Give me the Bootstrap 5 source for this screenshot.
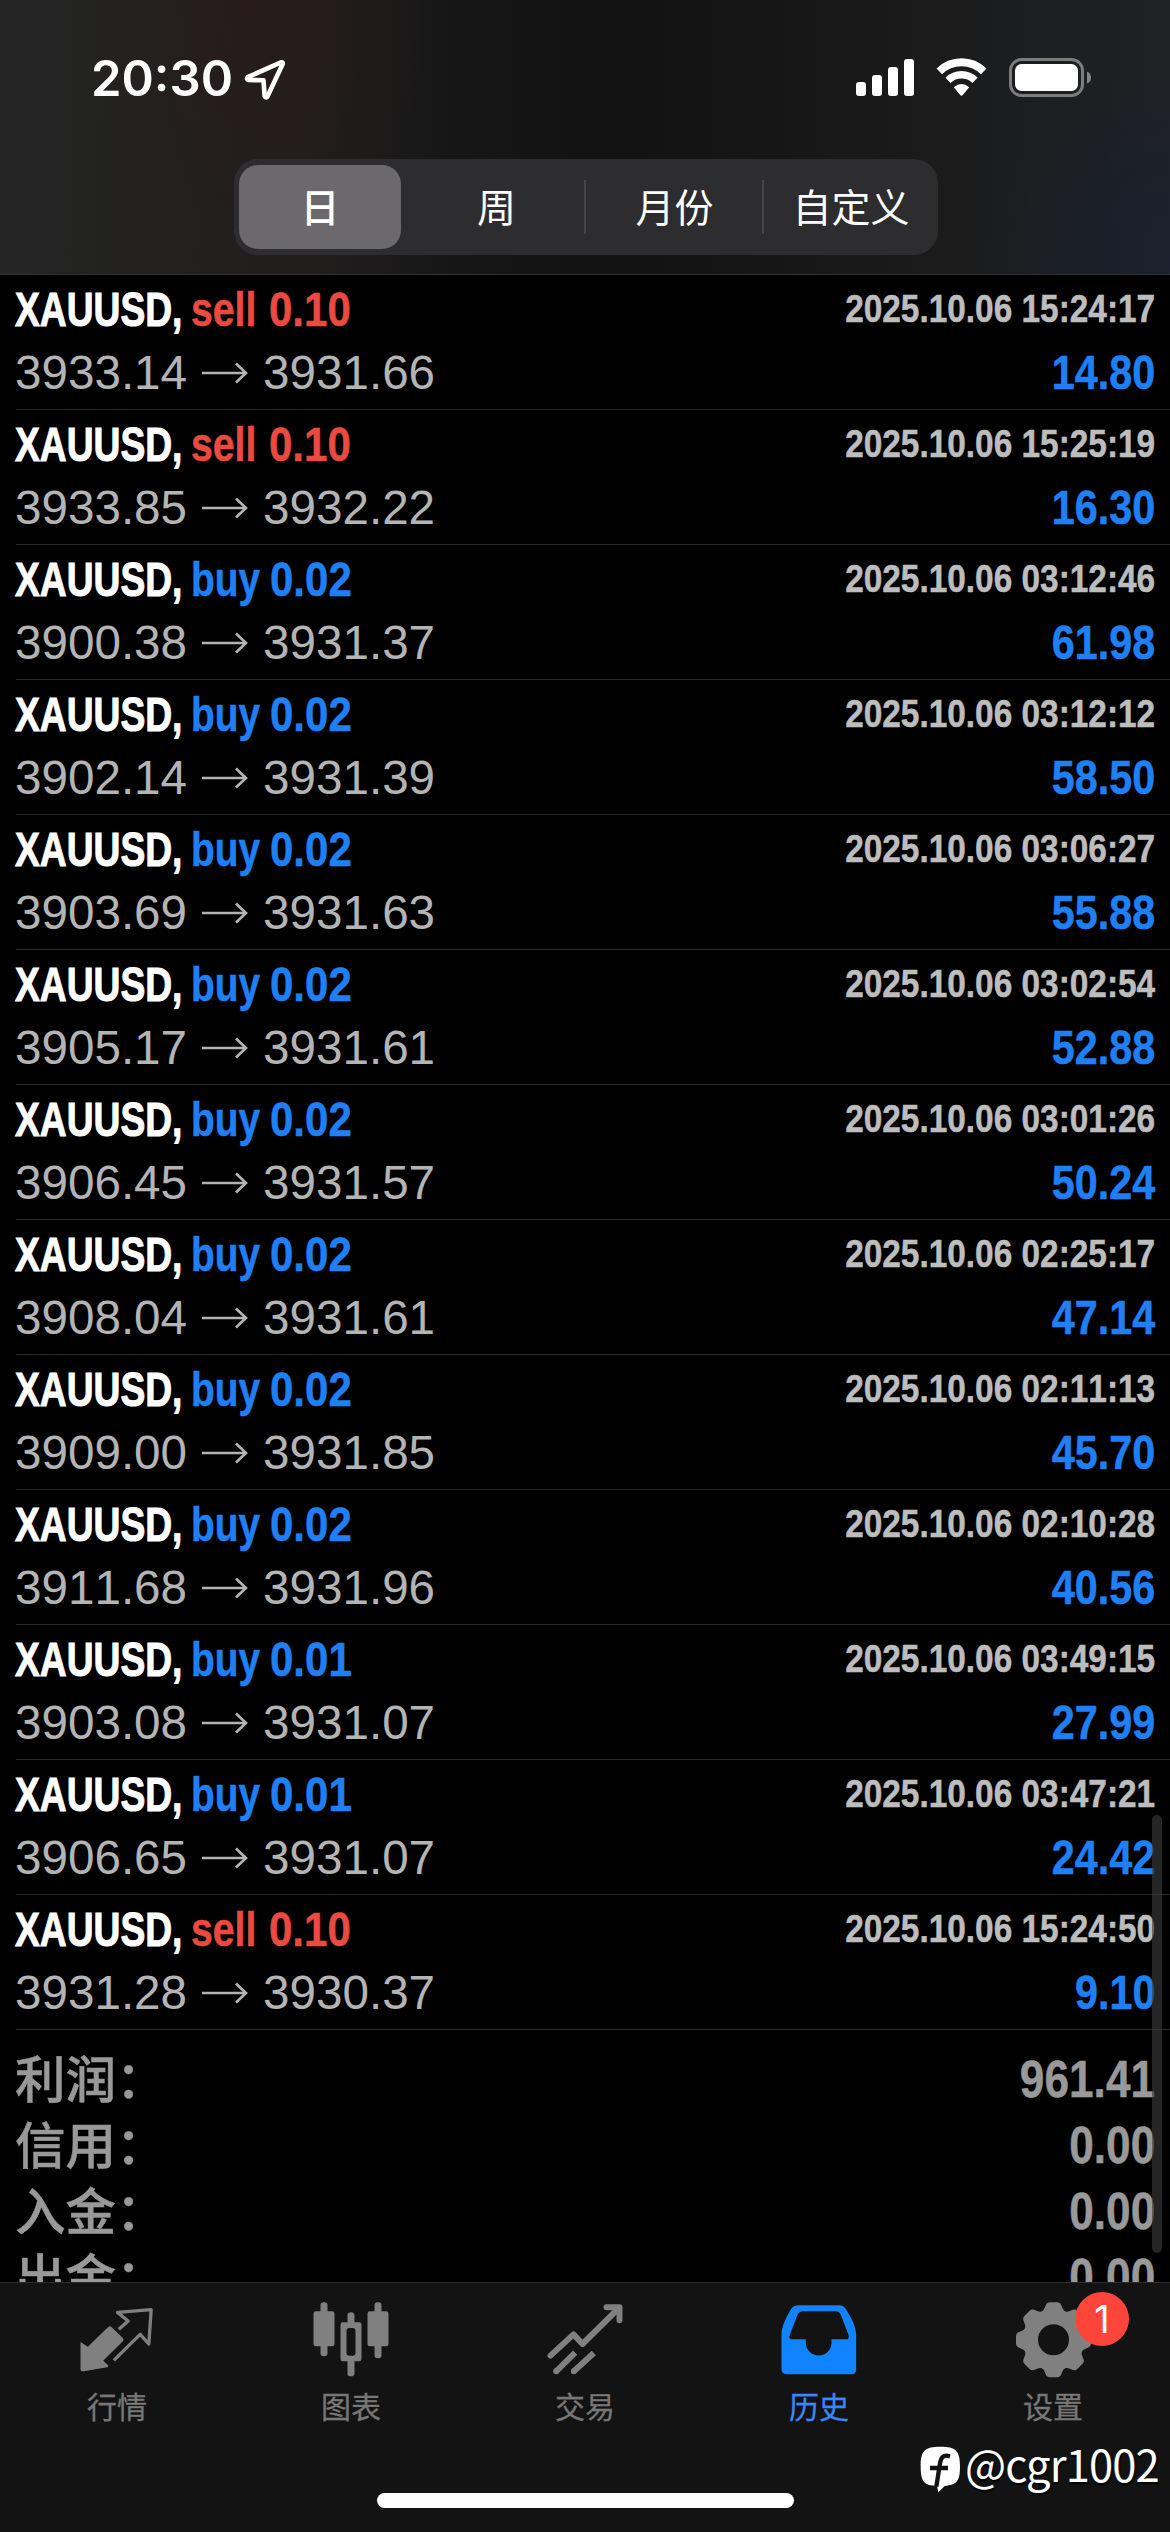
<!DOCTYPE html>
<html lang="zh-CN" data-bs-theme="dark">
<head>
<meta charset="utf-8">
<meta name="viewport" content="width=device-width, initial-scale=1">
<title>历史</title>
<link href="https://cdn.jsdelivr.net/npm/bootstrap@5.3.0/dist/css/bootstrap.min.css" rel="stylesheet">
<style>
  body { width: 1170px; height: 2532px; background: #000; font-family: "Liberation Sans", "Noto Sans CJK SC", sans-serif; font-kerning: none; overflow: hidden; }
  .top-area { height: 275px; border-bottom: 1px solid #323234;
    background: radial-gradient(circle at 1170px 270px, rgba(22,34,50,.65), transparent 200px),
      radial-gradient(ellipse 170px 320px at 255px 0, rgba(48,22,24,.4), transparent),
      linear-gradient(90deg, #252525 0, #222120 170px, #211e1e 310px, #151515 480px, #131313 600px, #141414 700px, #1b1b1b 930px, #1e2024 1130px, #1f2125 100%); }
  .status-row { height: 159px; padding: 41px 78px 0 91px; }
  .clock { font: 600 49px/76px Inter, sans-serif; }
  .cellular, .wifi-sign { margin-right: 22px; }
  .segments { width: 704px; height: 96px; margin-left: 234px; border-radius: 24px; background: #2d2d2f; grid-template-columns: 173px 178px 178px 175px; font: 400 39px/84px "Noto Sans CJK SC", sans-serif; }
  .seg { color: #fff; position: relative; text-align: center; padding: 4px 0 0 1px; }
  .seg.active span { display: block; margin: 2px 6px 0 4px; height: 84px; border-radius: 19px; background: #6b696c; line-height: 80px; font-weight: 500; }
  .seg.divided::after { content: ""; position: absolute; right: -1px; top: 21px; width: 2px; height: 54px; background: #454548; }
  .deals { margin-left: 16px; }
  .deal { height: 135px; padding: 3px 15px 0 0; border-bottom: 1px solid #2b2b2c; }
  .line { height: 63px; line-height: 63px; font-size: 48px; white-space: nowrap; }
  .fit { display: inline-block; transform-origin: 0 50%; font-weight: 700; -webkit-text-stroke: .5px currentColor; }
  .fit-end { transform-origin: 100% 50%; }
  .sym { width: 176px; color: #fff; margin-left: -1px; } .sym .fit { transform: scaleX(.775); -webkit-text-stroke-width: 1px; }
  .side-sell { width: 78px; } .side-buy { width: 79px; }
  .side-sell .fit { transform: scaleX(.815); } .side-buy .fit { transform: scaleX(.81); }
  .vol .fit { transform: scaleX(.875); }
  .sell { color: #ea4a40; } .buy { color: #1f80f5; }
  .stamp { font-size: 39px; line-height: 61px; color: #bdbdbd; } .stamp .fit { transform: scaleX(.856); }
  .price { color: #b4b4b4; margin-left: -1px; font-size: 47.6px; }
  .price svg { margin: 0 14px 0 14px; }
  .gain .fit { transform: scaleX(.86); color: #1f80f5; }
  .totals { margin: 0 15px 0 15px; padding-top: 16px; color: #999; }
  .total { height: 66px; line-height: 66px; }
  .total-name { font: 500 50.5px/60px "Noto Sans CJK SC", sans-serif; height: 60px; -webkit-text-stroke: .5px currentColor; }
  .total-num { font-size: 52px; } .total-num .fit { transform: scaleX(.85); }
  .thumb { left: 1152px; top: 1815px; width: 10px; height: 438px; border-radius: 5px; background: rgba(60,60,62,.62); }
  .tabs { height: 250px; background: #131313; border-top: 1px solid #2b2b2c; }
  .tab-item { width: 234px; padding: 19px 0 0; color: #777; font: 400 30px/36px "Noto Sans CJK SC", sans-serif; -webkit-text-stroke: .3px currentColor; }
  .tab-item svg { overflow: visible; color: #808080; margin-bottom: 10px; }
  .tab-item.active svg { color: #1283ff; }
  .tab-item.active { color: #3c86f5; }
  .alert-dot { left: 1075px; top: 2292px; width: 54px; height: 54px; background: #ff453a; color: #fff; font: 400 38px/54px Inter, sans-serif; }
  .home-bar { left: 377px; top: 2493px; width: 417px; height: 15px; background: #fff; border-radius: 8px; }
  .credit { left: 919px; top: 2440px; color: #fff; font: 400 43.5px/48px "Noto Sans CJK SC", sans-serif; letter-spacing: -.9px; text-shadow: 1px 2px 2px #000; white-space: nowrap; }
  .credit svg { margin: 6px 4px 0 1px; }
</style>
</head>
<body class="d-flex flex-column position-relative">
<header class="top-area flex-shrink-0">
  <div class="status-row d-flex justify-content-between align-items-start text-white">
    <div class="d-flex align-items-start">
      <span class="clock">20:30</span>
      <svg style="margin:17px 0 0 11px" width="42" height="42" viewBox="0 0 42 42" fill="none" stroke="#fff" stroke-width="4.6" stroke-linejoin="round"><path d="M37.5 4.2 3.6 19.2Q2 21.3 4.5 22L19.5 22.3 20.6 38Q22 41 23.7 38L38.8 5.7Q39 4 37.5 4.2Z"/></svg>
    </div>
    <div class="d-flex align-items-start" style="padding-top:17px">
      <svg class="cellular" width="58" height="39" viewBox="0 0 58 39" fill="#fff"><rect y="24" width="10" height="14" rx="3"/><rect x="16" y="17" width="10" height="21" rx="3"/><rect x="32" y="9" width="10" height="29" rx="3"/><rect x="48" y="1" width="10" height="37" rx="3"/></svg>
      <svg class="wifi-sign" width="51" height="39" viewBox="0 0 51 39"><g fill="none" stroke="#fff"><path d="M3.3 13.4A31.6 31.6 0 0 1 47.7 13.4" stroke-width="8"/><path d="M12 22.3A19.2 19.2 0 0 1 39 22.3" stroke-width="7.4"/></g><path d="M17.8 29.2Q25.5 23 33.2 29.2L26.8 37Q25.5 38.6 24.2 37Z" fill="#fff"/></svg>
      <svg width="83" height="40" viewBox="0 0 83 40"><rect x="1.5" y="1.5" width="72" height="36" rx="11" fill="none" stroke="#7c7c7d" stroke-width="3"/><rect x="6" y="6" width="63" height="27" rx="6.5" fill="#fff"/><path d="M78 13.5Q82 15 82 19.5T78 25.5Z" fill="#858586"/></svg>
    </div>
  </div>
  <nav class="segments d-grid">
    <a class="seg active text-decoration-none"><span>日</span></a>
    <a class="seg divided text-decoration-none">周</a>
    <a class="seg divided text-decoration-none">月份</a>
    <a class="seg text-decoration-none">自定义</a>
  </nav>
</header>

<main class="flex-grow-1 overflow-hidden" style="min-height:0">
  <div class="deals" id="deals"></div>
  <div class="totals">
    <div class="total d-flex justify-content-between"><span class="total-name">利润：</span><span class="total-num"><b class="fit fit-end">961.41</b></span></div>
    <div class="total d-flex justify-content-between"><span class="total-name">信用：</span><span class="total-num"><b class="fit fit-end">0.00</b></span></div>
    <div class="total d-flex justify-content-between"><span class="total-name">入金：</span><span class="total-num"><b class="fit fit-end">0.00</b></span></div>
    <div class="total d-flex justify-content-between"><span class="total-name">出金：</span><span class="total-num"><b class="fit fit-end">0.00</b></span></div>
  </div>
</main>
<div class="thumb position-absolute"></div>

<footer class="tabs d-flex flex-shrink-0">
  <div class="tab-item d-flex flex-column align-items-center">
    <svg width="75" height="75" viewBox="58.5 50 225 225"><path fill="currentColor" d="M60 170 82 184 143 125Q148 120 153 125L187 158Q191 163 187 168L128 226 143 240Q145 244 140 246L70 258Q60 259 60 250Z"/><path fill="none" stroke="currentColor" stroke-width="10" stroke-linejoin="round" d="M175 132 203 107 171 81 272 73 265 176 239 147 160 225"/></svg>
    行情
  </div>
  <div class="tab-item d-flex flex-column align-items-center">
    <svg width="75" height="75" viewBox="760.5 50 225 225" fill="currentColor"><rect x="780" y="51" width="21" height="162" rx="9"/><rect x="759" y="78" width="63" height="105" rx="7"/><rect x="942" y="51" width="21" height="168" rx="9"/><rect x="921" y="78" width="63" height="105" rx="7"/><path d="M861 111V91Q861 81 871 81T882 91V111H896Q903 111 903 118V221Q903 228 896 228H882V263Q882 273 871 273T861 263V228H847Q840 228 840 221V118Q840 111 847 111ZM867 128Q858 128 858 137V202Q858 211 867 211H876Q885 211 885 202V137Q885 128 876 128Z" fill-rule="evenodd"/></svg>
    图表
  </div>
  <div class="tab-item d-flex flex-column align-items-center">
    <svg width="75" height="75" viewBox="82.5 50 225 225" fill="none" stroke="currentColor" stroke-width="18" stroke-linejoin="round"><path stroke-linecap="round" d="M90 211 159 147 186 176 294 69M258 66H297V105"/><path d="M107 258 164 202M160 258 220 203"/><g fill="currentColor" stroke="none"><circle cx="107" cy="258" r="9"/><circle cx="160" cy="258" r="9"/></g></svg>
    交易
  </div>
  <div class="tab-item active d-flex flex-column align-items-center">
    <svg width="75" height="75" viewBox="784.5 50 225 225"><path fill="currentColor" fill-rule="evenodd" d="M832 60H958Q968 60 974 68C990 95 1007 120 1007 150V252Q1007 267 992 267H799Q783 267 783 252V150C783 120 800 90 814 68Q820 60 832 60ZM846 78Q836 78 832 86L808 148Q802 162 818 162H856V172A38.500 38.500 0 0 0 933 172V162H976Q988 162 984 148L960 86Q956 78 946 78Z"/></svg>
    历史
  </div>
  <div class="tab-item d-flex flex-column align-items-center">
    <svg width="75" height="75" viewBox="346.5 50 225 225" fill="currentColor"><defs><path id="tooth" d="M420 82Q430 76 434 64 438 51 448 51H470Q480 51 484 64 488 76 498 82Z"/></defs><circle cx="459" cy="163.500" r="69" fill="none" stroke="currentColor" stroke-width="45"/><use href="#tooth"/><use href="#tooth" transform="rotate(45 459 163.5)"/><use href="#tooth" transform="rotate(90 459 163.5)"/><use href="#tooth" transform="rotate(135 459 163.5)"/><use href="#tooth" transform="rotate(180 459 163.5)"/><use href="#tooth" transform="rotate(225 459 163.5)"/><use href="#tooth" transform="rotate(270 459 163.5)"/><use href="#tooth" transform="rotate(315 459 163.5)"/></svg>
    设置
  </div>
</footer>
<span class="alert-dot position-absolute rounded-circle text-center">1</span>
<div class="home-bar position-absolute"></div>
<div class="credit position-absolute d-flex align-items-start">
  <svg width="41" height="48" viewBox="58 484 123 144"><path fill="#fff" d="M60 545C60 498 72 486 119 486S178 498 178 545 168 600 132 604L113 623 109 604C70 603 60 592 60 545Z"/><path d="M148 515C126 508 120 520 117 542L107 606M88 550H142" fill="none" stroke="#131313" stroke-width="13"/></svg>
  <span>@cgr1002</span>
</div>

<script src="https://cdn.jsdelivr.net/npm/bootstrap@5.3.0/dist/js/bootstrap.bundle.min.js"></script>
<script>
  const deals = [
    ["sell", "0.10", "15:24:17", "3933.14", "3931.66", "14.80"],
    ["sell", "0.10", "15:25:19", "3933.85", "3932.22", "16.30"],
    ["buy", "0.02", "03:12:46", "3900.38", "3931.37", "61.98"],
    ["buy", "0.02", "03:12:12", "3902.14", "3931.39", "58.50"],
    ["buy", "0.02", "03:06:27", "3903.69", "3931.63", "55.88"],
    ["buy", "0.02", "03:02:54", "3905.17", "3931.61", "52.88"],
    ["buy", "0.02", "03:01:26", "3906.45", "3931.57", "50.24"],
    ["buy", "0.02", "02:25:17", "3908.04", "3931.61", "47.14"],
    ["buy", "0.02", "02:11:13", "3909.00", "3931.85", "45.70"],
    ["buy", "0.02", "02:10:28", "3911.68", "3931.96", "40.56"],
    ["buy", "0.01", "03:49:15", "3903.08", "3931.07", "27.99"],
    ["buy", "0.01", "03:47:21", "3906.65", "3931.07", "24.42"],
    ["sell", "0.10", "15:24:50", "3931.28", "3930.37", "9.10"]
  ];
  document.getElementById("deals").innerHTML = deals.map(([side, vol, time, open, close, gain]) => `
    <div class="deal">
      <div class="line d-flex justify-content-between">
        <div class="d-flex"><span class="sym"><span class="fit">XAUUSD,</span></span><span class="side-${side} ${side}"><span class="fit">${side}</span></span><span class="vol ${side}"><span class="fit">${vol}</span></span></div>
        <span class="stamp"><span class="fit fit-end">2025.10.06 ${time}</span></span>
      </div>
      <div class="line d-flex justify-content-between">
        <div class="price d-flex align-items-center"><span>${open}</span><svg width="48" height="24" viewBox="0 0 48 24" fill="none" stroke="currentColor" stroke-width="2.6"><path d="M1 12H45M35 2.500 45 12 35 21.500"/></svg><span>${close}</span></div>
        <span class="gain"><span class="fit fit-end">${gain}</span></span>
      </div>
    </div>`).join("");
</script>
</body>
</html>
